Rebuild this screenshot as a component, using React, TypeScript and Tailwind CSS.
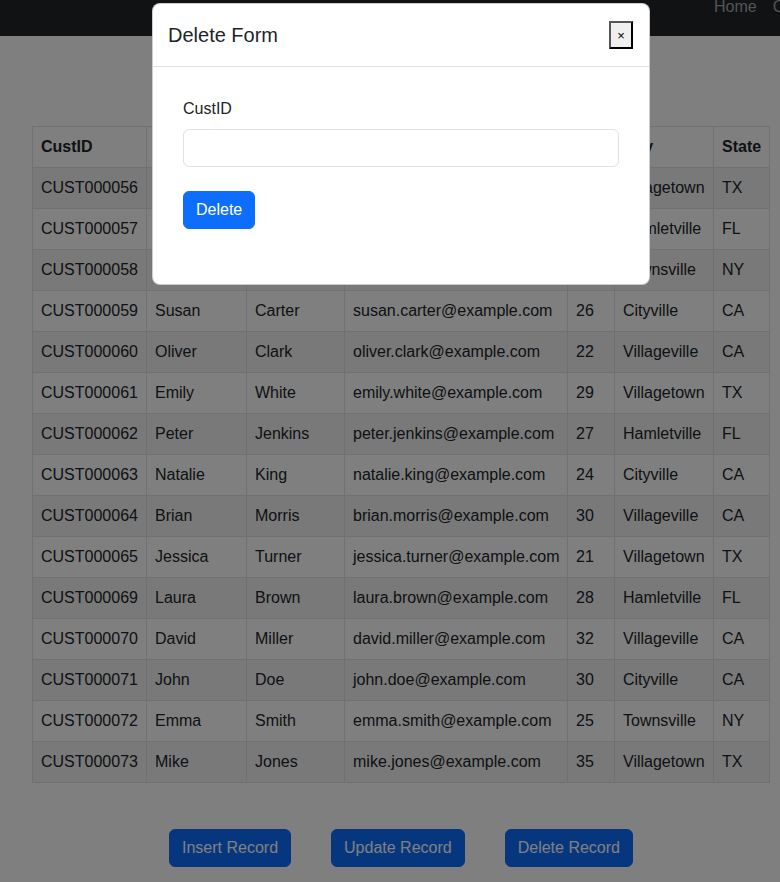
import React from "react";

type Customer = {
  id: string;
  first: string;
  last: string;
  email: string;
  age: number;
  city: string;
  state: string;
};

const customers: Customer[] = [
  { id: "CUST000056", first: "Michael", last: "Brown", email: "michael.brown@example.com", age: 31, city: "Villagetown", state: "TX" },
  { id: "CUST000057", first: "Sarah", last: "Davis", email: "sarah.davis@example.com", age: 27, city: "Hamletville", state: "FL" },
  { id: "CUST000058", first: "James", last: "Wilson", email: "james.wilson@example.com", age: 33, city: "Townsville", state: "NY" },
  { id: "CUST000059", first: "Susan", last: "Carter", email: "susan.carter@example.com", age: 26, city: "Cityville", state: "CA" },
  { id: "CUST000060", first: "Oliver", last: "Clark", email: "oliver.clark@example.com", age: 22, city: "Villageville", state: "CA" },
  { id: "CUST000061", first: "Emily", last: "White", email: "emily.white@example.com", age: 29, city: "Villagetown", state: "TX" },
  { id: "CUST000062", first: "Peter", last: "Jenkins", email: "peter.jenkins@example.com", age: 27, city: "Hamletville", state: "FL" },
  { id: "CUST000063", first: "Natalie", last: "King", email: "natalie.king@example.com", age: 24, city: "Cityville", state: "CA" },
  { id: "CUST000064", first: "Brian", last: "Morris", email: "brian.morris@example.com", age: 30, city: "Villageville", state: "CA" },
  { id: "CUST000065", first: "Jessica", last: "Turner", email: "jessica.turner@example.com", age: 21, city: "Villagetown", state: "TX" },
  { id: "CUST000069", first: "Laura", last: "Brown", email: "laura.brown@example.com", age: 28, city: "Hamletville", state: "FL" },
  { id: "CUST000070", first: "David", last: "Miller", email: "david.miller@example.com", age: 32, city: "Villageville", state: "CA" },
  { id: "CUST000071", first: "John", last: "Doe", email: "john.doe@example.com", age: 30, city: "Cityville", state: "CA" },
  { id: "CUST000072", first: "Emma", last: "Smith", email: "emma.smith@example.com", age: 25, city: "Townsville", state: "NY" },
  { id: "CUST000073", first: "Mike", last: "Jones", email: "mike.jones@example.com", age: 35, city: "Villagetown", state: "TX" },
];

const cell = "border border-[#dee2e6] px-2 py-2 text-left align-top whitespace-nowrap";

export default function App() {
  return (
    <div className="relative w-[780px] h-[882px] overflow-hidden bg-white font-['Liberation_Sans',Arial,sans-serif] text-base leading-6 text-[#212529]">
      <div className="w-[802px]">
        <nav className="h-[36px] bg-[#212529] overflow-hidden">
          <div className="flex gap-4 -mt-[5px] pl-[714px]">
            <span className="text-[#a7a9ac] whitespace-nowrap">Home</span>
            <span className="text-[#a7a9ac] whitespace-nowrap">Customers</span>
          </div>
        </nav>

        <div className="flex justify-center pt-[90px]">
          <table className="table-fixed w-[737px] border-collapse">
            <colgroup>
              <col className="w-[114px]" />
              <col className="w-[100px]" />
              <col className="w-[98px]" />
              <col className="w-[223px]" />
              <col className="w-[47px]" />
              <col className="w-[99px]" />
              <col className="w-[56px]" />
            </colgroup>
            <thead>
              <tr className="h-[40px]">
                <th className={cell + " font-bold"}>CustID</th>
                <th className={cell + " font-bold"}>First Name</th>
                <th className={cell + " font-bold"}>Last Name</th>
                <th className={cell + " font-bold"}>Email</th>
                <th className={cell + " font-bold"}>Age</th>
                <th className={cell + " font-bold"}>City</th>
                <th className={cell + " font-bold"}>State</th>
              </tr>
            </thead>
            <tbody>
              {customers.map((c) => (
                <tr key={c.id} className="h-[41px] odd:bg-[#f2f2f2]">
                  <td className={cell}>{c.id}</td>
                  <td className={cell}>{c.first}</td>
                  <td className={cell}>{c.last}</td>
                  <td className={cell}>{c.email}</td>
                  <td className={cell}>{c.age}</td>
                  <td className={cell}>{c.city}</td>
                  <td className={cell}>{c.state}</td>
                </tr>
              ))}
            </tbody>
          </table>
        </div>

        <div className="flex justify-center gap-10 pt-[46px]">
          <button className="bg-[#0d6efd] text-white rounded-md px-3 py-1.5 border border-[#0d6efd]">Insert Record</button>
          <button className="bg-[#0d6efd] text-white rounded-md px-3 py-1.5 border border-[#0d6efd]">Update Record</button>
          <button className="bg-[#0d6efd] text-white rounded-md px-3 py-1.5 border border-[#0d6efd]">Delete Record</button>
        </div>
      </div>

      {/* backdrop */}
      <div className="absolute inset-0 bg-black/50" />

      {/* modal */}
      <div className="absolute left-[152px] top-[3px] w-[498px] bg-white rounded-lg border border-black/20">
        <div className="flex items-center justify-between pl-[15px] pr-4 py-4 border-b border-[#dee2e6]">
          <h5 className="text-xl leading-[30px] font-normal">Delete Form</h5>
          <button className="w-[24px] h-[28px] bg-[#efefef] border-2 border-t-[#555] border-l-[#555] border-r-black border-b-black text-[13px] leading-none text-black">
            ×
          </button>
        </div>
        <div className="p-4">
          <div className="px-[14px] pt-[14px] pb-[39px]">
            <label className="block mb-2">CustID</label>
            <input
              type="text"
              className="block w-full h-[38px] rounded-md border border-[#dee2e6] px-3 outline-none"
            />
            <button className="mt-6 bg-[#0d6efd] text-white rounded-md px-3 py-1.5 border border-[#0d6efd]">Delete</button>
          </div>
        </div>
      </div>
    </div>
  );
}
